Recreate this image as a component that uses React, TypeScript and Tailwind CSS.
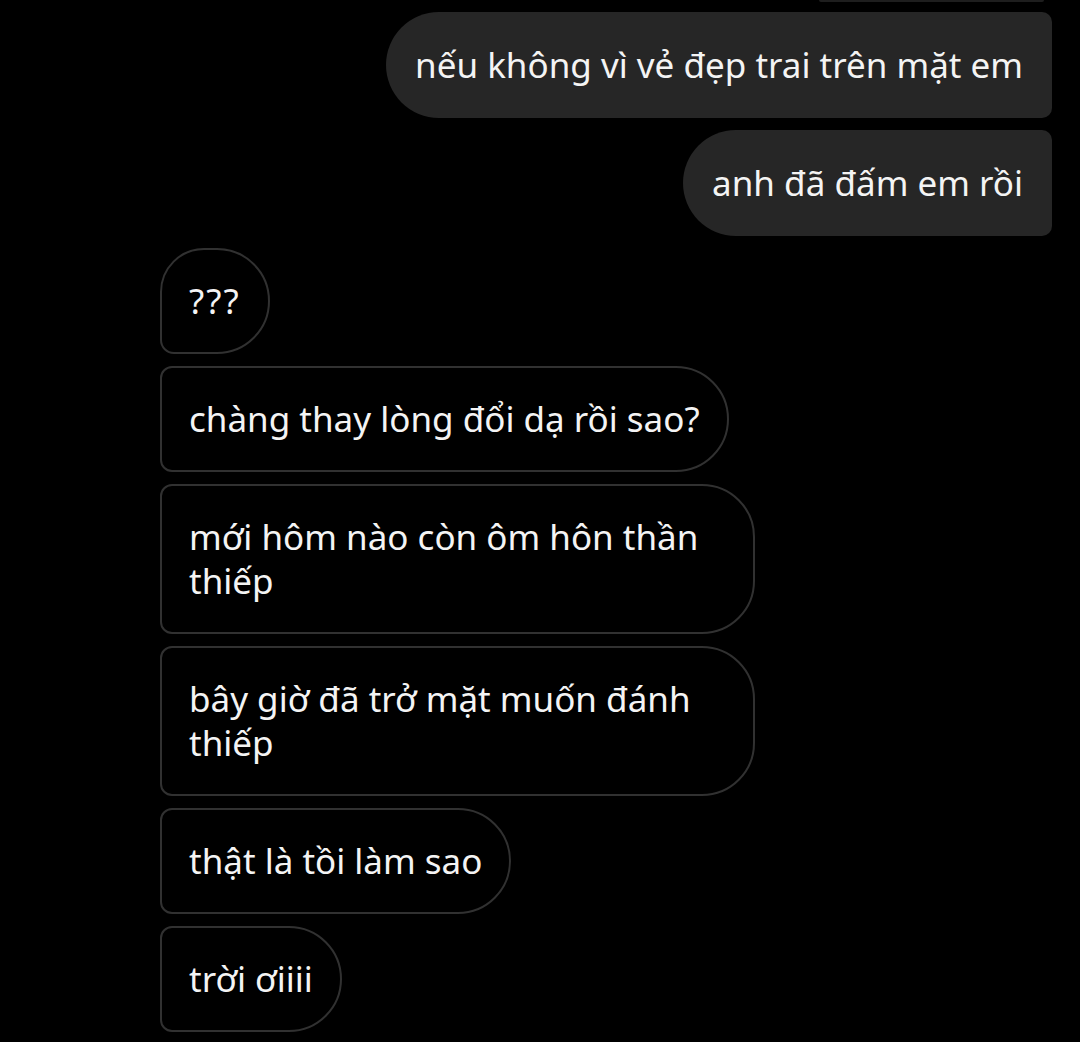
const sent = ["nếu không vì vẻ đẹp trai trên mặt em", "anh đã đấm em rồi"];

const received = [
  "chàng thay lòng đổi dạ rồi sao?",
  "mới hôm nào còn ôm hôn thần thiếp",
  "bây giờ đã trở mặt muốn đánh thiếp",
  "thật là tồi làm sao",
  "trời ơiiii",
];

export default function App() {
  return (
    <div
      className="min-h-screen bg-black text-[#f4f4f4] flex flex-col"
      style={{ fontFamily: '"Noto Sans", "Open Sans", sans-serif' }}
    >
      {/* tail of the previous bubble, cut off by the top edge */}
      <div className="self-end mr-[36px] h-[2px] w-[225px] rounded-b bg-[#1e1e1e]" />

      <div className="flex flex-col items-end gap-[12px] pr-[28px] pt-[10px]">
        {sent.map((m) => (
          <div
            key={m}
            className="bg-[#262626] rounded-l-[53px] rounded-r-[10px] h-[106px] px-[29px] flex items-center text-[35px] leading-[44px] whitespace-nowrap"
          >
            {m}
          </div>
        ))}
      </div>

      <div className="flex flex-col items-start gap-[12px] pl-[160px] pt-[12px] pb-[12px]">
        <div className="border-2 border-[#313131] rounded-tl-[44px] rounded-bl-[14px] rounded-r-[53px] h-[106px] px-[27px] flex items-center text-[35px] leading-[44px] tracking-[2px]">
          ???
        </div>
        {received.map((m) => (
          <div
            key={m}
            className="border-2 border-[#313131] rounded-l-[12px] rounded-r-[53px] max-w-[595px] px-[27px] py-[29px] text-[35px] leading-[44px]"
          >
            {m}
          </div>
        ))}
      </div>
    </div>
  );
}
